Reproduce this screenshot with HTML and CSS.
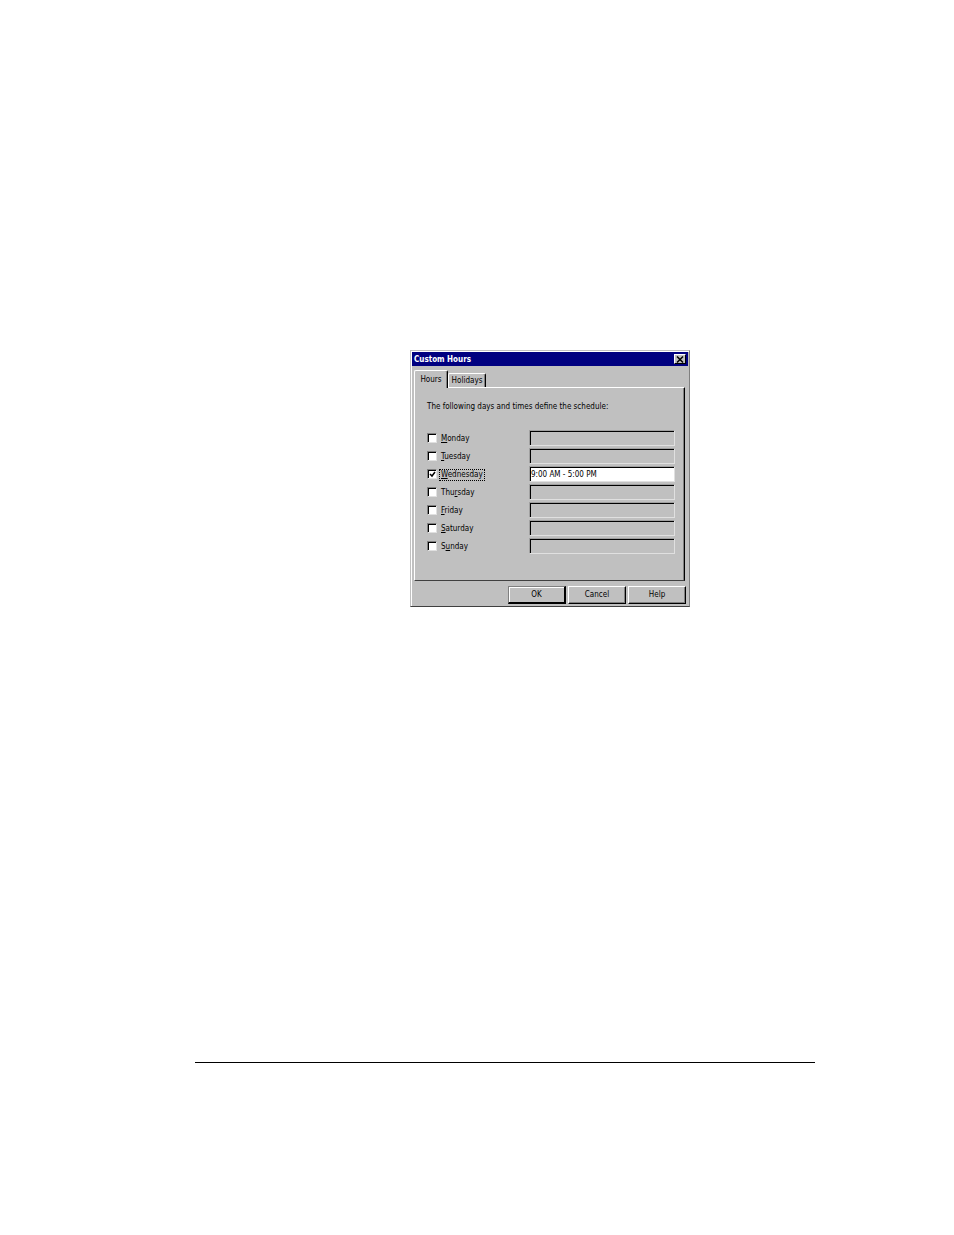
FILE: index.html
```html
<!DOCTYPE html>
<html lang="en">
<head>
    <meta charset="UTF-8">
    <meta name="viewport" content="width=device-width, initial-scale=1.0">
    <title>Custom Hours</title>
    <link rel="stylesheet" href="styles.css">
</head>
<body>
    <main>
        <form class="dialog">
            <div class="titlebar">
                <h1>Custom Hours</h1>
                <button type="button" class="close" aria-label="Close">
                    <svg width="8" height="7" viewBox="0 0 8 7"><path d="M1 0.5L7 6.5M7 0.5L1 6.5" stroke="#000" stroke-width="1.5"/></svg>
                </button>
            </div>

            <div class="tabs">
                <button type="button" class="tab active">Hours</button>
                <button type="button" class="tab">Holidays</button>
            </div>

            <div class="panel">
                <p>The following days and times define the schedule:</p>
                <div class="day">
                    <input type="checkbox" id="monday">
                    <label for="monday"><u>M</u>onday</label>
                    <input type="text" aria-label="Monday hours" disabled>
                </div>
                <div class="day">
                    <input type="checkbox" id="tuesday">
                    <label for="tuesday"><u>T</u>uesday</label>
                    <input type="text" aria-label="Tuesday hours" disabled>
                </div>
                <div class="day">
                    <input type="checkbox" id="wednesday" checked>
                    <label for="wednesday" class="focused"><u>W</u>ednesday</label>
                    <input type="text" aria-label="Wednesday hours" value="9:00 AM - 5:00 PM">
                </div>
                <div class="day">
                    <input type="checkbox" id="thursday">
                    <label for="thursday">Thu<u>r</u>sday</label>
                    <input type="text" aria-label="Thursday hours" disabled>
                </div>
                <div class="day">
                    <input type="checkbox" id="friday">
                    <label for="friday"><u>F</u>riday</label>
                    <input type="text" aria-label="Friday hours" disabled>
                </div>
                <div class="day">
                    <input type="checkbox" id="saturday">
                    <label for="saturday"><u>S</u>aturday</label>
                    <input type="text" aria-label="Saturday hours" disabled>
                </div>
                <div class="day">
                    <input type="checkbox" id="sunday">
                    <label for="sunday">S<u>u</u>nday</label>
                    <input type="text" aria-label="Sunday hours" disabled>
                </div>
            </div>

            <div class="buttons">
                <button type="submit" class="default">OK</button>
                <button type="button">Cancel</button>
                <button type="button">Help</button>
            </div>
        </form>
    </main>
    <hr>
</body>
</html>
```

FILE: styles.css
```css
* {
    box-sizing: border-box;
}

body {
    margin: 0;
    padding: 350px 139px 172px 195px;
    background: white;
    color: #000;
    font-family: "DejaVu Sans Condensed", "DejaVu Sans", sans-serif;
    font-size: 8px;
    line-height: 10px;
}

main {
    padding-left: 215px;
}

hr {
    margin: 455px 0 0;
    border: none;
    border-top: 1px solid #000;
}

button, input {
    margin: 0;
    padding: 0;
    color: #000;
    font: inherit;
}

button {
    background: #c0c0c0;
    border: 1px solid;
    border-color: #fff #000 #000 #fff;
}

.dialog {
    width: 280px;
    padding: 1px;
    background: #c0c0c0;
    border: 1px solid;
    border-color: #c0c0c0 #808080 #404040 #c0c0c0;
    box-shadow: inset 1px 1px #fff;
}

.titlebar {
    display: flex;
    justify-content: space-between;
    align-items: center;
    height: 14px;
    padding: 0 2px;
    background: #000080;
}

.titlebar h1 {
    margin: 0;
    padding-top: 2px;
    color: white;
    font-size: 8px;
}

.close {
    display: flex;
    justify-content: center;
    align-items: center;
    width: 12px;
    height: 10px;
}

.tabs {
    display: flex;
    align-items: flex-end;
    margin: 4px 3px 0 2px;
}

.tab {
    width: 38px;
    height: 14px;
    padding-top: 1px;
    border-bottom: none;
    border-radius: 2px 2px 0 0;
    box-shadow: inset -1px 0 #808080;
}

/* covers the top edge of the panel */
.tab.active {
    position: relative;
    width: 34px;
    height: 18px;
    margin-bottom: -1px;
}

.panel {
    margin: 0 3px 0 2px;
    padding: 14px 9px 25px 12px;
    border: 1px solid;
    border-color: #fff #000 #404040 #fff;
    box-shadow: inset -1px 0 #808080;
}

.panel p {
    margin: 0 0 17px;
}

.day {
    display: flex;
    align-items: center;
    height: 18px;
}

.day label {
    margin: 2px auto 0 3px;
    padding: 0 1px;
}

.day label.focused {
    outline: 1px dotted #000;
}

input[type="text"] {
    width: 146px;
    height: 16px;
    padding: 0 1px;
    background: white;
    border: 1px solid;
    border-color: #a0a0a0 #e0e0e0 #e0e0e0 #a0a0a0;
    box-shadow: inset 1px 1px #000;
}

input[type="text"]:disabled {
    background: #c0c0c0;
}

input[type="checkbox"] {
    appearance: none;
    width: 10px;
    height: 10px;
    background: white;
    border: 1px solid;
    border-color: #808080 #e0e0e0 #e0e0e0 #808080;
    box-shadow: inset 1px 1px #000;
}

input[type="checkbox"]:checked {
    background: white url("data:image/svg+xml,%3Csvg xmlns='http://www.w3.org/2000/svg' viewBox='0 0 8 8'%3E%3Cpath d='M2 4l2 2 3-4' fill='none' stroke='%23000' stroke-width='1.5'/%3E%3C/svg%3E");
}

.buttons {
    display: flex;
    justify-content: flex-end;
    gap: 2px;
    padding: 5px 2px 1px;
}

.buttons button {
    width: 58px;
    height: 18px;
    box-shadow: inset -1px -1px #808080;
}

.buttons .default {
    border-width: 1px 2px 2px 1px;
    border-color: #808080 #000 #000 #808080;
    box-shadow: inset 1px 1px #fff;
}
```
